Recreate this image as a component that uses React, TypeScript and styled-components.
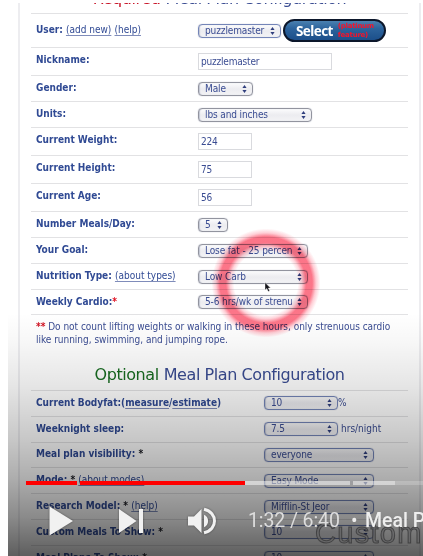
import React from 'react';
import styled, { createGlobalStyle } from 'styled-components';

const Global = createGlobalStyle`
  html, body { margin: 0; background: #fff; overflow: hidden; }
  * { box-sizing: border-box; }
`;

const Player = styled.main`
  position: relative;
  width: 415px;
  height: 553px;
  margin: 3px 0 0 8px;
  overflow: hidden;
  background: #fff;
  font-family: "DejaVu Sans Condensed", "DejaVu Sans", Verdana, sans-serif;
  font-stretch: 90%;
  font-size: 10px;
  color: #3a4c92;
`;

const Panel = styled.section`
  width: 403px;
  height: 600px;
  margin-left: 10px;
  padding: 0 11px;
  border: solid #ededf0;
  border-width: 0 2px;
`;

const Heading = styled.h2<{ $first?: boolean }>`
  display: flex;
  align-items: ${p => (p.$first ? 'flex-end' : 'center')};
  justify-content: center;
  gap: 5px;
  height: ${p => (p.$first ? 11 : 40)}px;
  margin: 0;
  padding: ${p => (p.$first ? '0 0 4px' : '9px 0 0')};
  border-bottom: 1px solid #e2e2e4;
  font-family: "DejaVu Sans", Verdana, sans-serif;
  font-stretch: normal;
  font-size: 16px;
  font-weight: 400;
  line-height: 20px;
  letter-spacing: -0.43px;
  white-space: nowrap;
`;

const HeadWord = styled.span<{ $color: string }>`
  color: ${p => p.$color};
`;

const Row = styled.div<{ $h: number }>`
  display: flex;
  height: ${p => p.$h}px;
  padding-left: 5px;
  align-items: center;
  border-bottom: 1px solid #e2e2e4;
`;

const Label = styled.div<{ $w: number; $lift?: number }>`
  flex: 0 0 ${p => p.$w}px;
  padding-bottom: ${p => p.$lift ?? 1}px;
  font-weight: 700;
  line-height: 14px;
  white-space: nowrap;
  color: #304a94;
`;

const Link = styled.a<{ $bold?: boolean }>`
  font-weight: ${p => (p.$bold ? 700 : 400)};
  text-decoration: underline;
  text-decoration-thickness: 1px;
  text-decoration-color: #7f8cba;
  text-underline-offset: 1.5px;
`;

const Star = styled.span<{ $color: string }>`
  color: ${p => p.$color};
  font-weight: 700;
`;

const Input = styled.div<{ $w: number }>`
  width: ${p => p.$w}px;
  height: 17px;
  padding-left: 2px;
  border: 1px solid #d9dade;
  line-height: 16px;
  letter-spacing: -0.2px;
`;

const SelectBox = styled.div<{ $w: number; $blue?: boolean }>`
  display: flex;
  align-items: center;
  justify-content: space-between;
  width: ${p => p.$w}px;
  height: 14px;
  padding: 0 5px 0 6px;
  border: 1px solid ${p => (p.$blue ? '#7485b8' : '#92949f')};
  border-radius: 4px;
  background: linear-gradient(#fcfcfd, #ececf0 50%, #f3f3f5);
  box-shadow: inset 1px 0 1px #c3c7d4, 0 0 1px #9fa5b8;
  line-height: 12px;
  letter-spacing: -0.12px;
  white-space: nowrap;
`;

const Clip = styled.span<{ $gap: number }>`
  flex: 1;
  min-width: 0;
  margin-right: ${p => p.$gap}px;
  overflow: hidden;
`;

const Suffix = styled.span<{ $gap: number }>`
  margin-left: ${p => p.$gap}px;
  padding-bottom: 2px;
  line-height: 13px;
`;

const Note = styled.p`
  height: 30px;
  margin: 6px 0 0;
  padding-left: 5px;
  line-height: 12.5px;
  letter-spacing: -0.02px;
  white-space: nowrap;
`;

const Pill = styled.button`
  display: flex;
  align-items: center;
  flex: none;
  width: 103px;
  height: 23px;
  margin: 0 0 0 2px;
  padding: 0 0 0 11px;
  border: 2px solid #0c172b;
  border-radius: 12px;
  background: linear-gradient(#4a80b0, #2c639c 40%, #1c4f8a);
  color: #fff;
  font: 700 13.5px/18px "Noto Sans", "Open Sans", sans-serif;
  letter-spacing: -0.6px;
`;

const Feature = styled.span`
  flex: 0 0 42px;
  margin-left: 5px;
  color: #f5142b;
  font: 700 7px/9px "DejaVu Sans", sans-serif;
  letter-spacing: -0.25px;
  text-align: left;
`;

const Halo = styled.div`
  position: absolute;
  left: 203px;
  top: 225px;
  width: 110px;
  height: 110px;
  border-radius: 50%;
  mix-blend-mode: multiply;
  background: radial-gradient(circle closest-side, transparent 58%, #ff8fa060 65%, #fb6076dd 73%, #fb6076dd 84%, #ff8fa070 91%, transparent 99%);
`;

const Pointer = styled.svg`
  position: absolute;
  left: 256px;
  top: 279px;
`;

const Shade = styled.div`
  position: absolute;
  inset: 310px 0 0;
  background: linear-gradient(
    rgba(0, 0, 0, 0) 0%, rgba(0, 0, 0, 0.03) 12%, rgba(0, 0, 0, 0.1) 30%,
    rgba(0, 0, 0, 0.22) 52%, rgba(0, 0, 0, 0.32) 68%, rgba(0, 0, 0, 0.46) 84%, rgba(0, 0, 0, 0.63) 100%
  );
`;

const Watermark = styled.div`
  position: absolute;
  left: 307px;
  top: 514px;
  font: 29px/32px "Liberation Sans", Arial, sans-serif;
  letter-spacing: 1.3px;
  color: rgba(100, 100, 102, 0.75);
  -webkit-text-stroke: 1px rgba(48, 48, 50, 0.7);
`;

const Progress = styled.div`
  position: absolute;
  left: 18px;
  right: 0;
  top: 478px;
  display: flex;
  height: 4px;
`;

const Segment = styled.div<{ $w: number; $color: string; $gap?: number }>`
  flex: 0 0 ${p => p.$w}px;
  margin-right: ${p => p.$gap ?? 0}px;
  background: ${p => p.$color};
`;

const Controls = styled.div`
  position: absolute;
  left: 0;
  right: 0;
  top: 497px;
  display: flex;
  align-items: center;
  height: 42px;
  padding-left: 41px;
  color: #eee;
  font: 19.5px/24px Roboto, sans-serif;
  font-stretch: normal;
  white-space: nowrap;
`;

const Icon = styled.svg<{ $after: number }>`
  flex: none;
  margin-right: ${p => p.$after}px;
  fill: #f1f1f1;
  filter: drop-shadow(0 0 1px rgba(0, 0, 0, 0.4));
`;

const Time = styled.span`
  flex: 0 0 103px;
  color: #ddd;
  letter-spacing: -0.1px;
`;

const Dot = styled.span`
  flex: 0 0 14px;
`;

const Chapter = styled.span`
  flex: none;
  font-weight: 500;
`;

const Arrows = () => (
  <svg width="5" height="8" viewBox="0 0 5 8" fill="#303f7e">
    <path d="M2.5 0L4.6 3H.4zM2.5 8L.4 5h4.2z" />
  </svg>
);

type SelectProps = { w: number; text: string; blue?: boolean };
const Select = ({ w, text, blue }: SelectProps) => (
  <SelectBox $w={w} $blue={blue}>
    <Clip $gap={w < 100 ? 2 : 5}>{text}</Clip>
    <Arrows />
  </SelectBox>
);

const OptionalStar = () => <Star $color="#17181f"> *</Star>;

export default function App() {
  return (
    <>
      <Global />
      <Player>
        <Panel>
          <Heading $first>
            <HeadWord $color="#c81428">Required</HeadWord>
            <HeadWord $color="#3a4c92">Meal Plan Configuration</HeadWord>
          </Heading>
          <Row $h={34}>
            <Label $w={162}>User: <Link>(add new)</Link> <Link>(help)</Link></Label>
            <Select w={83} text="puzzlemaster" blue />
            <Pill>Select<Feature>(platinum feature)</Feature></Pill>
          </Row>
          <Row $h={28}>
            <Label $w={162} $lift={3}>Nickname:</Label>
            <Input $w={134}>puzzlemaster</Input>
          </Row>
          <Row $h={26}>
            <Label $w={162}>Gender:</Label>
            <Select w={55} text="Male" />
          </Row>
          <Row $h={26}>
            <Label $w={162}>Units:</Label>
            <Select w={114} text="lbs and inches" />
          </Row>
          <Row $h={28}>
            <Label $w={162} $lift={3}>Current Weight:</Label>
            <Input $w={54}>224</Input>
          </Row>
          <Row $h={28}>
            <Label $w={162} $lift={3}>Current Height:</Label>
            <Input $w={54}>75</Input>
          </Row>
          <Row $h={28}>
            <Label $w={162} $lift={3}>Current Age:</Label>
            <Input $w={54}>56</Input>
          </Row>
          <Row $h={26}>
            <Label $w={162}>Number Meals/Day:</Label>
            <Select w={30} text="5" />
          </Row>
          <Row $h={26}>
            <Label $w={162}>Your Goal:</Label>
            <Select w={110} text="Lose fat - 25 percent" />
          </Row>
          <Row $h={26}>
            <Label $w={162}>Nutrition Type: <Link>(about types)</Link></Label>
            <Select w={110} text="Low Carb" />
          </Row>
          <Row $h={25}>
            <Label $w={162}>Weekly Cardio:<Star $color="#e01020">*</Star></Label>
            <Select w={110} text="5-6 hrs/wk of strenuous" />
          </Row>
          <Note>
            <Star $color="#d01020">**</Star> Do not count lifting weights or walking in these hours, only strenuous cardio
            <br />
            like running, swimming, and jumping rope.
          </Note>
          <Heading>
            <HeadWord $color="#176c20">Optional</HeadWord>
            <HeadWord $color="#3a4c92">Meal Plan Configuration</HeadWord>
          </Heading>
          <Row $h={25.8}>
            <Label $w={228}>Current Bodyfat:(<Link $bold>measure</Link>/<Link $bold>estimate</Link>)</Label>
            <Select w={74} text="10" blue />
            <Suffix $gap={0}>%</Suffix>
          </Row>
          <Row $h={25.8}>
            <Label $w={228}>Weeknight sleep:</Label>
            <Select w={74} text="7.5" blue />
            <Suffix $gap={3}>hrs/night</Suffix>
          </Row>
          <Row $h={25.8}>
            <Label $w={228}>Meal plan visibility:<OptionalStar /></Label>
            <Select w={110} text="everyone" blue />
          </Row>
          <Row $h={25.8}>
            <Label $w={228}>Mode:<OptionalStar /> <Link>(about modes)</Link></Label>
            <Select w={110} text="Easy Mode" blue />
          </Row>
          <Row $h={25.8}>
            <Label $w={228}>Research Model:<OptionalStar /> <Link>(help)</Link></Label>
            <Select w={110} text="Mifflin-St Jeor" blue />
          </Row>
          <Row $h={25.8}>
            <Label $w={228}>Custom Meals To Show:<OptionalStar /></Label>
            <Select w={110} text="10" blue />
          </Row>
          <Row $h={25.8}>
            <Label $w={228}>Meal Plans To Show:<OptionalStar /></Label>
            <Select w={110} text="10" blue />
          </Row>
        </Panel>
        <Halo />
        <Pointer width="8" height="10" viewBox="0 0 8 10">
          <path d="M1 .5V8l1.8-1.5L4.2 9.6l1.5-.7-1.4-2.8h2.3z" fill="#15151b" stroke="#fff" strokeWidth=".4" />
        </Pointer>
        <Shade />
        <Watermark>Custom</Watermark>
        <Progress>
          <Segment $w={51} $color="#f00" $gap={3} />
          <Segment $w={165} $color="#f00" />
          <Segment $w={105} $color="rgba(255,255,255,.5)" $gap={3} />
          <Segment $w={42} $color="rgba(255,255,255,.5)" />
          <Segment $w={30} $color="rgba(255,255,255,.2)" />
        </Progress>
        <Controls>
          <Icon $after={46} width="24" height="30" viewBox="0 0 24 30"><path d="M.5.5L24 15 .5 29.5z" /></Icon>
          <Icon $after={44} width="25" height="26" viewBox="0 0 25 26"><path d="M0 1l17.5 12L0 25zM20 1h4v24h-4z" /></Icon>
          <Icon $after={32} width="28" height="28" viewBox="0 0 28 28">
            <path d="M0 9.5h6L13.5 2v24L6 18.5H0zM16 7.8c5.5 2 5.5 10.4 0 12.4z" />
            <path d="M16 2.2c14 3 14 20.6 0 23.6" fill="none" stroke="#f1f1f1" strokeWidth="3" />
          </Icon>
          <Time>1:32 / 6:40</Time>
          <Dot>•</Dot>
          <Chapter>Meal Plan</Chapter>
        </Controls>
      </Player>
    </>
  );
}
